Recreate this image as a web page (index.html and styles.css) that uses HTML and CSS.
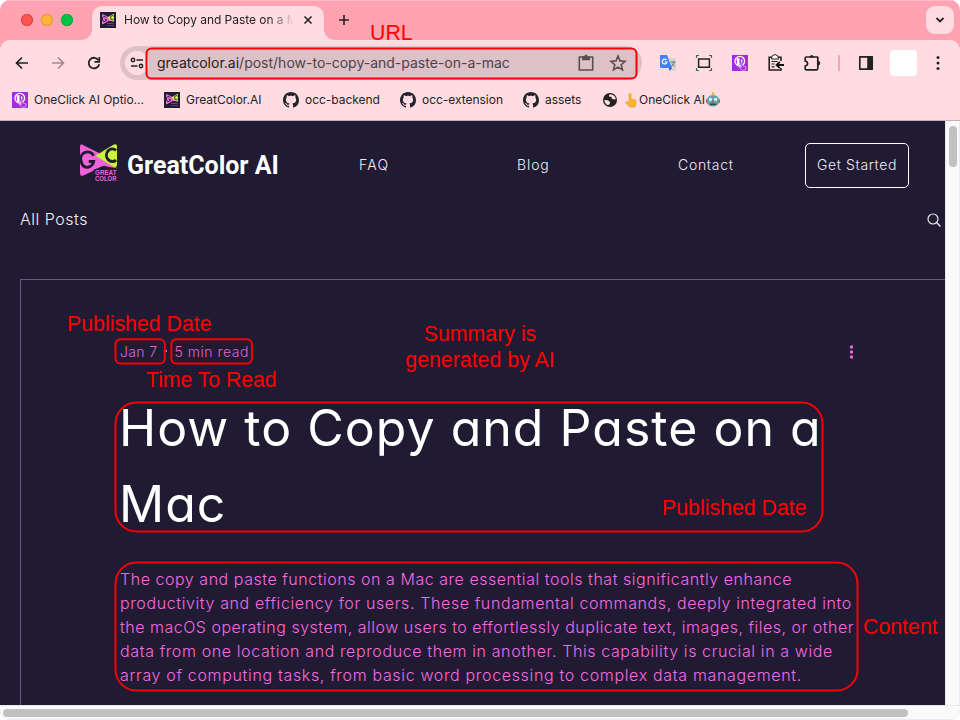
FILE: index.html
```html
<!DOCTYPE html>
<html lang="en">
<head>
<meta charset="utf-8">
<title>How to Copy and Paste on a Mac</title>
<link rel="stylesheet" href="styles.css">
</head>
<body>
<svg class="defs" width="0" height="0" aria-hidden="true">
  <defs>
    <symbol id="gc" viewBox="0 0 38 38" preserveAspectRatio="none">
      <path d="M3 1Q0-1 0 3V30Q0 34 4 32L24 22.500 38 26V2Q38-1 34 1L19 9Z" fill="#ef63d8"/>
      <path d="M19 9L34 1Q38-1 38 3V25L19 9Z" fill="#201a32"/>
      <path d="M16 12L34 1Q38-1 38 3V21Q38 25 34 23Z" fill="#c9f53c"/>
      <path d="M14 12A7 7 0 0 0 1 17Q2 24 8 24 13 23 14 18H9" fill="none" stroke="#201a32" stroke-width="3"/>
      <path d="M37 6.500A6 6.500 0 1 0 37 16.500" fill="none" stroke="#201a32" stroke-width="3"/>
      <path d="M14 26.500L24 22.500 38 25V38H14Z" fill="#201a32"/>
      <text x="15.500" y="31.500" class="mark" textLength="22" lengthAdjust="spacingAndGlyphs">GREAT</text>
      <text x="15.500" y="37.700" class="mark" textLength="22" lengthAdjust="spacingAndGlyphs">COLOR</text>
    </symbol>
    <symbol id="gh" viewBox="0 0 16 16">
      <path fill="#24242b" d="M8 0C3.58 0 0 3.58 0 8c0 3.54 2.29 6.53 5.47 7.59.4.07.55-.17.55-.38 0-.19-.01-.82-.01-1.49-2.01.37-2.53-.49-2.69-.94-.09-.23-.48-.94-.82-1.13-.28-.15-.68-.52-.01-.53.63-.01 1.08.58 1.23.82.72 1.21 1.87.87 2.33.66.07-.52.28-.87.51-1.07-1.78-.2-3.64-.89-3.64-3.95 0-.87.31-1.59.82-2.15-.08-.2-.36-1.02.08-2.12 0 0 .67-.21 2.2.82.64-.18 1.32-.27 2-.27s1.36.09 2 .27c1.53-1.04 2.2-.82 2.2-.82.44 1.1.16 1.92.08 2.12.51.56.82 1.27.82 2.15 0 3.07-1.87 3.75-3.65 3.95.29.25.54.73.54 1.48 0 1.07-.01 1.93-.01 2.2 0 .21.15.46.55.38A8.01 8.01 0 0 0 16 8c0-4.42-3.58-8-8-8z"/>
    </symbol>
    <symbol id="oc" viewBox="0 0 16 16">
      <path d="M0 0H16V16H0Z" fill="#a32bdc"/>
      <circle cx="7.8" cy="6.2" r="4.8" fill="none" stroke="#fff" stroke-width="1.3"/>
      <path d="M4.500 3.500L7.500 3V10H5.200Z" fill="#fff"/>
      <path d="M9 4.500Q10.500 5.500 9.500 7.500" fill="none" stroke="#fff" stroke-width="1.200"/>
      <path d="M8.6 8.5Q9.6 7.6 10.3 9L11 11 14 12 13.6 15 10 15.2 7 12.2 9.4 12.4Z" fill="#a32bdc" stroke="#e6b8f7" stroke-width=".8"/>
    </symbol>
  </defs>
</svg>
<div class="window">
  <header class="tabstrip">
    <div class="lights"><i class="red"></i><i class="amber"></i><i class="green"></i></div>
    <div class="tab">
      <span class="fav"><svg width="12" height="12"><use href="#gc"/></svg></span>
      <span class="tab-title">How to Copy and Paste on a M</span>
      <svg class="close" width="10" height="10" viewBox="0 0 10 10"><path d="M1.5 1.5L8.5 8.5M8.5 1.5L1.5 8.5" stroke="#222" stroke-width="1.6"/></svg>
    </div>
    <svg class="plus" width="12" height="12" viewBox="0 0 12 12"><path d="M6 1V11M1 6H11" stroke="#222" stroke-width="1.6"/></svg>
    <div class="chev"><svg width="10" height="10" viewBox="0 0 10 10"><path d="M1.5 3L5 6.5 8.5 3" fill="none" stroke="#222" stroke-width="1.8"/></svg></div>
  </header>
  <div class="chrome">
    <div class="toolbar">
      <svg class="ic" viewBox="0 0 24 24"><path d="M18 12H7M12 6.5L6.5 12 12 17.5" fill="none" stroke="#222" stroke-width="1.7"/></svg>
      <svg class="ic" viewBox="0 0 24 24"><path d="M6 12H17M12 6.5L17.5 12 12 17.5" fill="none" stroke="#a8868e" stroke-width="1.7"/></svg>
      <svg class="ic" viewBox="0 0 24 24"><path d="M16.6 9.4A5.3 5.3 0 1 0 17.2 13.2" fill="none" stroke="#222" stroke-width="1.8"/><path d="M17.3 6V10.8H12.5" fill="none" stroke="#222" stroke-width="1.7"/></svg>
      <div class="omni">
        <span class="site"><svg width="14" height="12" viewBox="0 0 14 12"><path d="M6.5 3H13M1 9H7.5" stroke="#222" stroke-width="1.6"/><circle cx="3" cy="3" r="1.7" fill="none" stroke="#222" stroke-width="1.4"/><circle cx="11" cy="9" r="1.7" fill="none" stroke="#222" stroke-width="1.4"/></svg></span>
        <span class="url"><b>greatcolor.ai</b>/post/how-to-copy-and-paste-on-a-mac</span>
        <svg class="oi" viewBox="0 0 18 18"><path d="M2.3 3H15.7V16H2.3Z" fill="none" stroke="#5a4e53" stroke-width="1.6" stroke-linejoin="round"/><path d="M5 2.500H7.4Q7.5 .5 9 .5T10.6 2.500H13V6.300H5Z" fill="#5a4e53"/></svg>
        <svg class="oi" viewBox="0 0 18 18"><path d="M9 2L11 6.9 16.2 7.3 12.2 10.7 13.5 15.9 9 13.1 4.5 15.9 5.8 10.7 1.8 7.3 7 6.9Z" fill="none" stroke="#5a4e53" stroke-width="1.6"/></svg>
      </div>
      <svg class="ic ext" viewBox="0 0 24 24"><path d="M13 7H20V20H14Z" fill="#d9d3d5"/><path d="M14.5 11H19.5M17 10V11M18.5 11Q18 14 15 15.5M16 12.5L19 15.5" stroke="#5f7f85" fill="none"/><path d="M4 4H11L16 17H5Q4 17 4 16Z" fill="#4083f0"/><path d="M13 17H16L13.5 20Z" fill="#2456c0"/><path d="M10.5 9A2.4 2.4 0 1 0 11 11H8.700" fill="none" stroke="#fff" stroke-width="1.2"/></svg>
      <svg class="ic" viewBox="0 0 24 24"><path d="M6.6 8H17.4V16.2H6.6Z" fill="none" stroke="#222" stroke-width="1.5"/><path d="M4.5 7V4.5H7M17 4.5H19.5V7M19.5 17V19.5H17M7 19.5H4.5V17" fill="none" stroke="#2c7a31" stroke-width="1.2"/></svg>
      <svg class="ic p4" viewBox="0 0 16 16"><use href="#oc"/></svg>
      <svg class="ic" viewBox="0 0 24 24"><path d="M17 10V6.2H5.2V19H17V17" fill="none" stroke="#222" stroke-width="1.6"/><path d="M7.500 8L8 5 11 3.500 14 5 14.500 8Z" fill="#fff" stroke="#222"/><path d="M7.5 10.5H13.5M7.5 13H10.5M7.5 15.8H10.5" stroke="#222" stroke-width="1.2"/><path d="M20 14H13M15.8 10.8L12.6 14 15.8 17.2" fill="none" stroke="#111" stroke-width="1.9"/></svg>
      <svg class="ic" viewBox="0 0 24 24"><path d="M6.2 6H17.2Q17.8 6 17.8 6.6V17.6Q17.8 18.8 16.6 18.8H6.4Q5.2 18.8 5.2 17.8V15Q7.6 14.6 7.6 12.6T5.2 10V7Q5.2 6 6.2 6Z" fill="none" stroke="#222" stroke-width="1.7"/><path d="M9.8 6A2 2 0 0 1 13.6 6ZM17.8 10.2A2 2 0 0 1 17.8 14.2Z" fill="#222" stroke="#222"/></svg>
      <i class="sep"></i>
      <svg class="ic side" viewBox="0 0 24 24"><path d="M5.8 5.8H18.2V18.2H5.8Z" fill="none" stroke="#222" stroke-width="1.7" stroke-linejoin="round"/><path d="M13.2 5H18.5V19H13.2Z" fill="#222"/></svg>
      <i class="avatar"></i>
      <svg class="ic menu" viewBox="0 0 24 24"><g fill="#222"><circle cx="12" cy="6.6" r="1.5"/><circle cx="12" cy="12" r="1.5"/><circle cx="12" cy="17.4" r="1.5"/></g></svg>
    </div>
    <nav class="marks">
      <a class="m1"><svg width="16" height="16"><use href="#oc"/></svg><span>OneClick AI Optio...</span></a>
      <a class="m2"><span class="fav"><svg width="12" height="12"><use href="#gc"/></svg></span><span>GreatColor.AI</span></a>
      <a class="m3"><svg width="16" height="16"><use href="#gh"/></svg><span>occ-backend</span></a>
      <a class="m4"><svg width="16" height="16"><use href="#gh"/></svg><span>occ-extension</span></a>
      <a class="m5"><svg width="16" height="16"><use href="#gh"/></svg><span>assets</span></a>
      <a class="m6"><svg width="16" height="16" viewBox="0 0 16 16"><circle cx="8" cy="8" r="7" fill="#222"/><path d="M8 2.2Q6.5 3 7 4.5L9.5 5 10 7 13.5 7.5 13.6 6Q12.5 2.6 8 2.2ZM2.3 8L6 8.2 8 10 7.8 12 6 13.3Q2.6 12 2.3 8Z" fill="#ffdce2"/></svg>
        <svg class="hand" width="12" height="16" viewBox="0 0 12 16"><path d="M4 7V2Q5 .3 6 2V7L10.5 8Q11.5 8.5 11 11L10 15H4.5L1 11Q.3 9.6 1.5 9.4L4 10.5Z" fill="#fdb52b" stroke="#e8962a" stroke-width=".6"/></svg><span>OneClick AI</span>
        <svg width="14" height="16" viewBox="0 0 14 16"><path d="M6.4 1H7.6V4H6.4Z" fill="#e8a33c"/><circle cx="7" cy="1.6" r="1.4" fill="#f0b040"/><rect x="0" y="6.5" width="14" height="5" rx="2" fill="#c5483c"/><rect x="1" y="3.3" width="12" height="11.2" rx="5" fill="#5fa3a8"/><circle cx="4.4" cy="7.4" r="1.7" fill="#d9f3f2"/><circle cx="9.6" cy="7.4" r="1.7" fill="#d9f3f2"/><circle cx="7" cy="9.4" r="1" fill="#d8453a"/><path d="M4 11.5H10V13H4Z" fill="#23474d"/></svg></a>
    </nav>
  </div>
  <div class="view">
    <main class="page">
      <div class="sitehead">
        <svg class="logo" width="37" height="37"><use href="#gc"/></svg>
        <strong class="brand">GreatColor AI</strong>
        <a class="n1">FAQ</a>
        <a class="n2">Blog</a>
        <a class="n3">Contact</a>
        <a class="cta">Get Started</a>
      </div>
      <div class="posts"><span>All Posts</span><svg width="16" height="16" viewBox="0 0 16 16"><circle cx="7" cy="7" r="5" fill="none" stroke="#e8e6ee" stroke-width="1.2"/><path d="M10.6 10.6L14.5 14.5" stroke="#e8e6ee" stroke-width="1.4"/></svg></div>
      <article class="post">
        <div class="meta"><span class="d1">Jan 7</span><i class="bullet"></i><span class="d2">5 min read</span>
          <svg class="more" width="5" height="14" viewBox="0 0 5 14"><g fill="#f065dc"><circle cx="2.5" cy="2" r="1.7"/><circle cx="2.5" cy="7" r="1.7"/><circle cx="2.5" cy="12" r="1.7"/></g></svg></div>
        <h1>How to Copy and Paste on a<br>Mac</h1>
        <p>
          <span class="l1">The copy and paste functions on a Mac are essential tools that significantly enhance</span><br>
          <span class="l2">productivity and efficiency for users. These fundamental commands, deeply integrated into</span><br>
          <span class="l3">the macOS operating system, allow users to effortlessly duplicate text, images, files, or other</span><br>
          <span class="l4">data from one location and reproduce them in another. This capability is crucial in a wide</span><br>
          <span class="l5">array of computing tasks, from basic word processing to complex data management.</span>
        </p>
      </article>
    </main>
    <div class="vbar"><i></i></div>
    <div class="hbar"><i></i></div>
  </div>
  <svg class="boxes" width="960" height="720" viewBox="0 0 960 720" fill="none" stroke="#f60006" stroke-width="2">
    <rect x="146.500" y="48.500" width="490" height="30" rx="5"/>
    <rect x="115.500" y="339.200" width="49.300" height="24.300" rx="5"/>
    <rect x="171.300" y="339.200" width="80.600" height="24.300" rx="5"/>
    <rect x="115.500" y="402.500" width="707" height="129" rx="21"/>
    <rect x="115.500" y="562.500" width="742" height="128" rx="21"/>
  </svg>
  <div class="note t-url">URL</div>
  <div class="note t-date">Published Date</div>
  <div class="note t-time">Time To Read</div>
  <div class="note t-sum">Summary is<br>generated by AI</div>
  <div class="note t-pub">Published Date</div>
  <div class="note t-con">Content</div>
</div>
</body>
</html>
```
FILE: styles.css
```css
* { box-sizing: border-box; }
body { margin: 0; background: #fff; font-family: Inter, "Liberation Sans", sans-serif; }
.defs { position: absolute; }
svg { display: block; flex: none; }
.window { position: relative; width: 960px; height: 720px; overflow: hidden; border-radius: 10px; display: flex; flex-direction: column; background: #ffa3b3; }
.mark { font: bold 7px "Liberation Sans", sans-serif; letter-spacing: 0; fill: #ef63d8; }

.tabstrip { height: 40px; flex: none; display: flex; align-items: center; border-top: 1px solid #ffb9c5; padding: 0 6px 1px 21px; }
.lights { display: flex; gap: 8px; width: 71px; }
.lights i { width: 12px; height: 12px; border-radius: 50%; }
.red { background: #ff5450; box-shadow: inset 0 0 0 1px #df4443; }
.amber { background: #ffb433; box-shadow: inset 0 0 0 1px #df9a2d; }
.green { background: #00c441; box-shadow: inset 0 0 0 1px #0aa83a; }
.tab { position: relative; width: 232px; height: 34px; align-self: flex-end; margin-bottom: -1px; background: #ffdce2; border-radius: 10px 10px 0 0; display: flex; align-items: center; padding: 0 11px 7px 8px; }
.tab::before, .tab::after { content: ""; position: absolute; bottom: 0; width: 10px; height: 10px; }
.tab::before { left: -10px; background: radial-gradient(circle at 0 0, transparent 9.5px, #ffdce2 10px); }
.tab::after { right: -10px; background: radial-gradient(circle at 100% 0, transparent 9.5px, #ffdce2 10px); }
.fav { width: 16px; height: 16px; background: #201a32; display: flex; align-items: center; justify-content: center; flex: none; }
.tab-title { font-size: 12px; line-height: 16px; letter-spacing: -.04px; color: #222; margin-left: 8px; width: 174px; white-space: nowrap; -webkit-mask-image: linear-gradient(90deg, #000 145px, transparent 170px); mask-image: linear-gradient(90deg, #000 145px, transparent 170px); }
.close { margin-left: auto; }
.plus { margin-left: 14px; }
.chev { margin-left: auto; width: 28px; height: 28px; border-radius: 9px; background: #ffdce2; display: flex; align-items: center; justify-content: center; }

.chrome { height: 81px; flex: none; background: #ffdce2; border-bottom: 1px solid #c9adb6; border-radius: 10px 10px 0 0; }
.toolbar { height: 46px; display: flex; align-items: center; padding-left: 10px; }
.ic { width: 24px; height: 24px; margin-right: 12px; }
.omni { margin-left: 2px; width: 522px; height: 34px; border-radius: 17px; background: #dec0c7; display: flex; align-items: center; padding-left: 5px; }
.site { width: 24px; height: 24px; border-radius: 50%; background: #ffdce2; display: flex; align-items: center; justify-content: center; }
.url { margin-left: 8px; width: 420px; font-size: 14px; line-height: 20px; color: #4c4347; white-space: nowrap; }
.url b { font-weight: 400; color: #222; }
.oi { width: 18px; height: 18px; margin-right: 14px; }
.ext { margin-left: 14px; }
.p4 { width: 16px; height: 16px; margin: 0 16px 0 4px; }
.sep { width: 2px; height: 16px; background: #ffa3b3; margin: 0 14px 0 2px; }
.side { margin-right: 12px; }
.avatar { width: 27px; height: 26px; border-radius: 4px; background: #fff; margin-right: 9px; }
.menu { margin: 0; }

.marks { display: flex; align-items: center; height: 28px; padding-left: 12px; font-size: 12px; line-height: 16px; color: #222; white-space: nowrap; }
.marks a { display: flex; align-items: center; gap: 6px; letter-spacing: -.03px; }
.m1 { width: 152px; }
.m2 { width: 119px; }
.m3 { width: 117px; }
.m4 { width: 123px; }
.m5 { width: 79px; }
.marks .m6 { gap: 0; }
.hand { margin: 0 2px 0 7px; }
.m6 svg:last-child { margin-left: 1px; }

.view { flex: 1; display: grid; grid-template: 584px 15px / 945px 15px; background: #fafafa; }
.page { background: #201a32; color: #fff; overflow: hidden; font-weight: 300; }
.sitehead { height: 85px; display: flex; align-items: center; padding: 3px 0 0 80px; font-size: 14px; letter-spacing: .6px; color: #f0eef4; }
.logo { margin-top: -6px; }
.brand { font: 700 25px/32px Roboto, sans-serif; letter-spacing: -.02px; color: #fff; margin: 2px 0 0 10px; width: 232px; white-space: nowrap; }
.n1, .n2, .n3 { padding-bottom: 2px; }
.n1 { width: 158px; letter-spacing: 1.3px; }
.n2 { width: 161px; letter-spacing: .9px; }
.n3 { width: 127px; letter-spacing: .7px; }
.cta { width: 104px; height: 45px; margin-top: 1px; border: 1px solid #fff; border-radius: 5px; display: flex; align-items: center; justify-content: center; padding-bottom: 2px; white-space: nowrap; }
.posts { height: 27px; padding: 0 3px 0 20px; display: flex; align-items: center; justify-content: space-between; font-size: 16px; letter-spacing: .52px; color: #f0eef4; }
.posts span { margin-top: -2px; }
.post { margin: 46px 0 0 20px; height: 500px; border: solid #655b87; border-width: 1px 0 0 1px; padding-left: 99px; }
.meta { height: 20px; margin-top: 61px; display: flex; align-items: center; font-size: 14px; color: #e263d2; white-space: nowrap; }
.d1 { letter-spacing: .35px; margin-right: 8px; }
.bullet { width: 2px; height: 2px; background: #e263d2; margin-right: 7px; }
.d2 { letter-spacing: .55px; }
.more { position: absolute; left: 849px; top: 345px; }
h1 { margin: 29px 0 0 -1px; font-size: 50px; line-height: 76px; letter-spacing: 1.02px; font-weight: 400; white-space: nowrap; font-feature-settings: "cv11"; }
p { margin: 25px 0 0; font-size: 16px; line-height: 24px; color: #f56be0; white-space: nowrap; }
.l1 { letter-spacing: .535px; }
.l2 { letter-spacing: .61px; }
.l3 { letter-spacing: .5px; }
.l4 { letter-spacing: .61px; }
.l5 { letter-spacing: .66px; }
.vbar { background: #fafafa; border-left: 1px solid #e8e8e8; border-right: 1px solid #ececec; padding: 5px 0 0 3px; }
.vbar i { display: block; width: 8px; height: 41px; border-radius: 4px; background: #c1c1c1; }
.hbar { grid-column: 1 / 3; border-top: 1px solid #e8e8e8; border-bottom: 1px solid #ececec; padding: 3px 0 0 3px; }
.hbar i { display: block; width: 905px; height: 8px; border-radius: 4px; background: #c1c1c1; }

.boxes { position: absolute; left: 0; top: 0; }
.note { position: absolute; font: 21.33px/26px "Liberation Sans", sans-serif; color: #f00; white-space: nowrap; }
.t-url { left: 370px; top: 20px; }
.t-date { left: 67px; top: 311px; }
.t-time { left: 146px; top: 367px; letter-spacing: -.08px; }
.t-sum { left: 405px; top: 321px; width: 150px; text-align: center; }
.t-pub { left: 662px; top: 495px; }
.t-con { left: 863px; top: 614px; }
```
